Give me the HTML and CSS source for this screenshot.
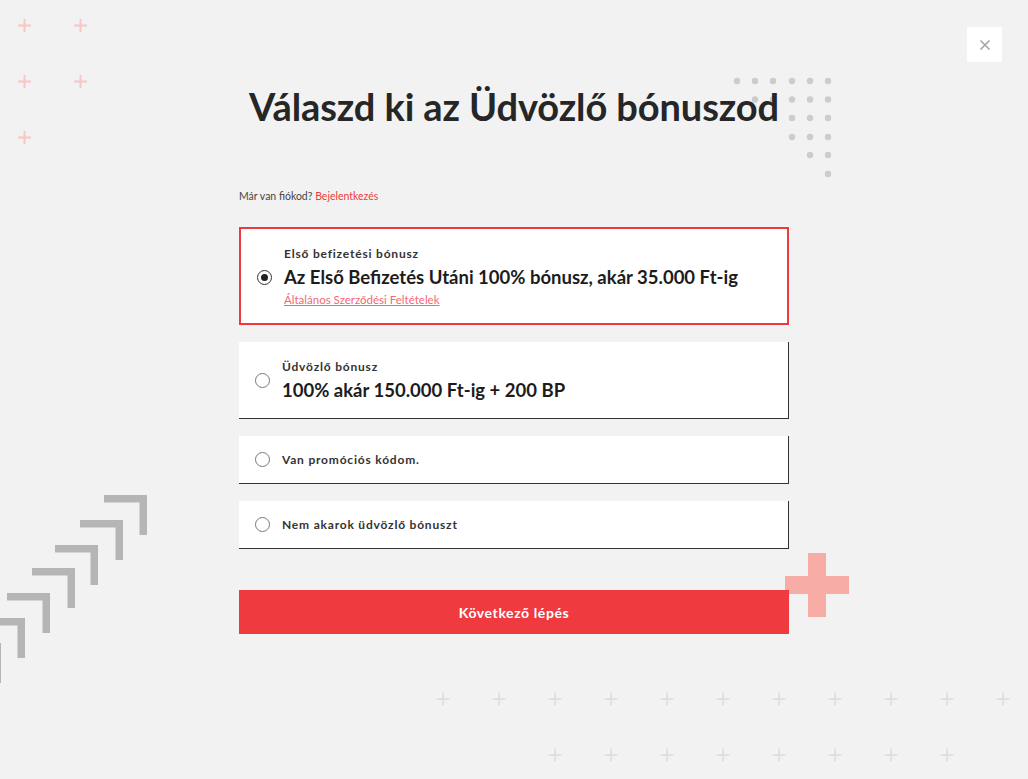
FILE: index.html
```html
<!DOCTYPE html>
<html lang="hu">
<head>
<meta charset="utf-8">
<title>Üdvözlő bónusz</title>
<link rel="stylesheet" href="styles.css">
</head>
<body>
<div class="page">
  <!-- background ornaments -->
  <svg class="deco deco-pluses-tl" width="100" height="150" viewBox="0 0 100 150">
    <g fill="#f7c6c1">
      <rect x="18" y="24.5" width="13" height="2"/><rect x="23.5" y="19" width="2" height="13"/>
      <rect x="74" y="24.5" width="13" height="2"/><rect x="79.5" y="19" width="2" height="13"/>
      <rect x="18" y="80.5" width="13" height="2"/><rect x="23.5" y="75" width="2" height="13"/>
      <rect x="74" y="80.5" width="13" height="2"/><rect x="79.5" y="75" width="2" height="13"/>
      <rect x="18" y="136.5" width="13" height="2"/><rect x="23.5" y="131" width="2" height="13"/>
    </g>
  </svg>

  <svg class="deco deco-dots" width="110" height="110" viewBox="0 0 110 110">
    <g fill="#cccccc">
      <circle cx="7" cy="6" r="3.2"/><circle cx="25" cy="6" r="3.2"/><circle cx="43" cy="6" r="3.2"/><circle cx="62" cy="6" r="3.2"/><circle cx="80" cy="6" r="3.2"/><circle cx="98" cy="6" r="3.2"/>
      <circle cx="25" cy="24.5" r="3.2"/><circle cx="43" cy="24.5" r="3.2"/><circle cx="62" cy="24.5" r="3.2"/><circle cx="80" cy="24.5" r="3.2"/><circle cx="98" cy="24.5" r="3.2"/>
      <circle cx="43" cy="43" r="3.2"/><circle cx="62" cy="43" r="3.2"/><circle cx="80" cy="43" r="3.2"/><circle cx="98" cy="43" r="3.2"/>
      <circle cx="62" cy="62" r="3.2"/><circle cx="80" cy="62" r="3.2"/><circle cx="98" cy="62" r="3.2"/>
      <circle cx="80" cy="80" r="3.2"/><circle cx="98" cy="80" r="3.2"/>
      <circle cx="98" cy="99" r="3.2"/>
    </g>
  </svg>

  <svg class="deco deco-steps" width="160" height="210" viewBox="0 480 160 210">
    <g fill="#b5b5b5">
      <path d="M104 495h43v40h-7.5v-32.5H104z"/>
      <path d="M80 520h43v40h-7.5v-32.5H80z"/>
      <path d="M55 545h43v40h-7.5v-32.5H55z"/>
      <path d="M32 568h43v40h-7.5v-32.5H32z"/>
      <path d="M7 593h43v40h-7.5v-32.5H7z"/>
      <path d="M-18 618h43v40h-7.5v-32.5H-18z"/>
      <path d="M-42 643h43v40h-7.5v-32.5H-42z"/>
    </g>
  </svg>

  <svg class="deco deco-cross" width="64" height="64" viewBox="0 0 64 64">
    <path fill="#f8aca6" d="M23 0h18v23h23v18H41v23H23V41H0V23h23z"/>
  </svg>

  <svg class="deco deco-pluses-bottom" width="600" height="80" viewBox="430 690 600 80">
    <defs>
      <g id="pl"><rect x="-6.5" y="-0.75" width="13" height="1.5"/><rect x="-0.75" y="-6.5" width="1.5" height="13"/></g>
    </defs>
    <g fill="#dcdcdc">
      <use href="#pl" x="443" y="699"/><use href="#pl" x="499" y="699"/><use href="#pl" x="555" y="699"/><use href="#pl" x="611" y="699"/><use href="#pl" x="667" y="699"/><use href="#pl" x="723" y="699"/><use href="#pl" x="779" y="699"/><use href="#pl" x="835" y="699"/><use href="#pl" x="891" y="699"/><use href="#pl" x="947" y="699"/><use href="#pl" x="1003" y="699"/>
      <use href="#pl" x="555" y="755"/><use href="#pl" x="611" y="755"/><use href="#pl" x="667" y="755"/><use href="#pl" x="723" y="755"/><use href="#pl" x="779" y="755"/><use href="#pl" x="835" y="755"/><use href="#pl" x="891" y="755"/><use href="#pl" x="947" y="755"/>
    </g>
  </svg>

  <button class="close" type="button" aria-label="Bezárás">
    <svg width="12" height="12" viewBox="0 0 12 12"><path d="M1.5 1.5l9 9M10.5 1.5l-9 9" stroke="#a6a6a6" stroke-width="1.6" fill="none"/></svg>
  </button>

  <main class="wizard">
    <h1 class="title">Válaszd ki az Üdvözlő bónuszod</h1>
    <p class="login">Már van fiókod? <a href="#" class="login-link">Bejelentkezés</a></p>

    <div class="options">
      <label class="option option-selected">
        <span class="radio radio-checked"></span>
        <span class="option-body">
          <span class="option-kicker">Első befizetési bónusz</span>
          <span class="option-title">Az Első Befizetés Utáni 100% bónusz, akár 35.000 Ft-ig</span>
          <a href="#" class="option-terms">Általános Szerződési Feltételek</a>
        </span>
      </label>

      <label class="option">
        <span class="radio"></span>
        <span class="option-body">
          <span class="option-kicker">Üdvözlő bónusz</span>
          <span class="option-title">100% akár 150.000 Ft-ig + 200 BP</span>
        </span>
      </label>

      <label class="option option-short">
        <span class="radio"></span>
        <span class="option-text">Van promóciós kódom.</span>
      </label>

      <label class="option option-short">
        <span class="radio"></span>
        <span class="option-text">Nem akarok üdvözlő bónuszt</span>
      </label>
    </div>

    <button class="next" type="button">Következő lépés</button>
  </main>
</div>
</body>
</html>
```
FILE: styles.css
```css
* {
  box-sizing: border-box;
}

html,
body {
  margin: 0;
  height: 100%;
}

body {
  background: #f2f2f2;
  font-family: Lato, "Noto Sans", sans-serif;
  color: #222;
  overflow: hidden;
}

.page {
  position: relative;
  min-height: 779px;
}

/* decorative background shapes */
.deco {
  position: absolute;
  display: block;
  pointer-events: none;
}

.deco-pluses-tl {
  left: 0;
  top: 0;
}

.deco-dots {
  left: 730px;
  top: 75px;
}

.deco-steps {
  left: 0;
  top: 480px;
}

.deco-cross {
  left: 785px;
  top: 553px;
}

.deco-pluses-bottom {
  left: 430px;
  top: 690px;
}

.close {
  position: absolute;
  left: 967px;
  top: 27px;
  width: 35px;
  height: 35px;
  border: 0;
  padding: 0;
  background: #fff;
  display: flex;
  align-items: center;
  justify-content: center;
  cursor: pointer;
}

.close svg {
  display: block;
}

/* wizard column */
.wizard {
  position: relative;
  z-index: 1;
  width: 550px;
  margin: 0 auto;
  padding-top: 82px;
}

.title {
  margin: 0 -60px;
  text-align: center;
  font-size: 38px;
  line-height: 48px;
  font-weight: 700;
  color: #262626;
  letter-spacing: -0.1px;
}

.login {
  margin: 58px 0 0;
  font-size: 10.5px;
  line-height: 16px;
  color: #444;
}

.login-link {
  color: #ee3a40;
  text-decoration: none;
}

.options {
  margin-top: 23px;
  display: flex;
  flex-direction: column;
  gap: 17px;
}

.option {
  display: flex;
  align-items: center;
  gap: 12px;
  background: #fff;
  padding: 17px 16px 16px;
  border-right: 1px solid #333;
  border-bottom: 1px solid #333;
  cursor: pointer;
}

.option-selected {
  border: 2px solid #ee3a3f;
  padding: 17px 16px 15px;
}

.option-short {
  height: 48px;
  padding-top: 0;
  padding-bottom: 0;
}

.radio {
  flex: none;
  width: 15px;
  height: 15px;
  border: 1px solid #777;
  border-radius: 50%;
  display: flex;
  align-items: center;
  justify-content: center;
}

.radio-checked {
  border-color: #333;
}

.radio-checked::after {
  content: "";
  width: 7px;
  height: 7px;
  border-radius: 50%;
  background: #222;
}

.option-body {
  display: flex;
  flex-direction: column;
  align-items: flex-start;
}

.option-kicker {
  font-size: 12px;
  line-height: 16px;
  font-weight: 700;
  letter-spacing: 0.8px;
  color: #333;
}

.option-title {
  margin-top: 3px;
  font-size: 18.5px;
  line-height: 24px;
  font-weight: 700;
  color: #1c1c1c;
}

.option-terms {
  margin-top: 3px;
  font-size: 11.5px;
  line-height: 16px;
  color: #f06a70;
  text-decoration: underline;
}

.option-text {
  font-size: 12px;
  line-height: 16px;
  font-weight: 700;
  letter-spacing: 0.8px;
  color: #333;
}

.next {
  display: block;
  width: 100%;
  height: 44px;
  margin-top: 41px;
  border: 0;
  background: #ef3a3f;
  color: #fff;
  font-family: inherit;
  font-size: 14px;
  font-weight: 700;
  letter-spacing: 0.6px;
  cursor: pointer;
}
```
